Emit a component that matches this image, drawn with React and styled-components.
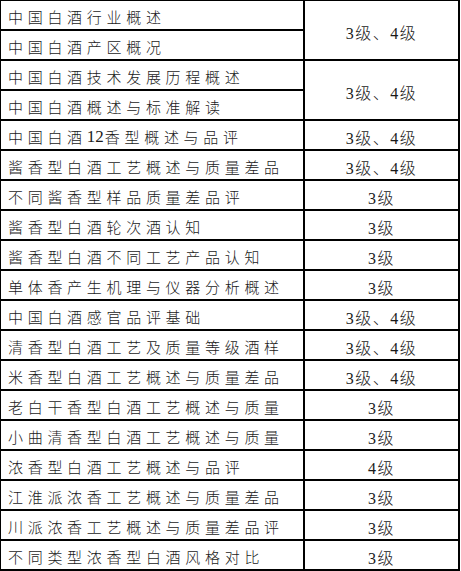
import React from "react";
import styled, { createGlobalStyle } from "styled-components";

const GlobalStyle = createGlobalStyle`
  html, body {
    margin: 0;
    padding: 0;
    background: #ffffff;
  }
  body {
    width: 461px;
    height: 571px;
    overflow: hidden;
  }
`;

const Sheet = styled.div`
  display: grid;
  grid-template-columns: 302px 153px;
  grid-auto-rows: 28px;
  gap: 2px;
  padding: 2px;
  margin: -1px 0 0 -1px;
  width: fit-content;
  background: #000000;
  font-family: "Liberation Serif", "Noto Sans CJK SC", serif;
  color: #1a1a1a;
`;

const NameCell = styled.div`
  grid-column: 1;
  grid-row: ${(p) => p.$row};
  display: flex;
  align-items: center;
  padding: 3px 0 0 7px;
  background: #ffffff;
  font-size: 15px;
  font-weight: 300;
  letter-spacing: 4.7px;
  white-space: nowrap;
  overflow: hidden;
`;

const Digits = styled.span`
  font-size: 17px;
  font-weight: 400;
  letter-spacing: 0;
  margin-right: 1px;
`;

const LevelCell = styled.div`
  grid-column: 2;
  grid-row: ${(p) => p.$row} / span ${(p) => p.$span};
  display: flex;
  align-items: center;
  justify-content: center;
  padding-top: 3px;
  background: #ffffff;
  font-size: 16px;
  font-weight: 300;
  letter-spacing: 1.5px;
  white-space: nowrap;
`;

const groups = [
  { names: ["中国白酒行业概述", "中国白酒产区概况"], level: "3级、4级" },
  { names: ["中国白酒技术发展历程概述", "中国白酒概述与标准解读"], level: "3级、4级" },
  { names: ["中国白酒12香型概述与品评"], level: "3级、4级" },
  { names: ["酱香型白酒工艺概述与质量差品"], level: "3级、4级" },
  { names: ["不同酱香型样品质量差品评"], level: "3级" },
  { names: ["酱香型白酒轮次酒认知"], level: "3级" },
  { names: ["酱香型白酒不同工艺产品认知"], level: "3级" },
  { names: ["单体香产生机理与仪器分析概述"], level: "3级" },
  { names: ["中国白酒感官品评基础"], level: "3级、4级" },
  { names: ["清香型白酒工艺及质量等级酒样"], level: "3级、4级" },
  { names: ["米香型白酒工艺概述与质量差品"], level: "3级、4级" },
  { names: ["老白干香型白酒工艺概述与质量"], level: "3级" },
  { names: ["小曲清香型白酒工艺概述与质量"], level: "3级" },
  { names: ["浓香型白酒工艺概述与品评"], level: "4级" },
  { names: ["江淮派浓香工艺概述与质量差品"], level: "3级" },
  { names: ["川派浓香工艺概述与质量差品评"], level: "3级" },
  { names: ["不同类型浓香型白酒风格对比"], level: "3级" },
];

// keep runs of digits tight, as in the source document
const renderName = (name) =>
  name
    .split(/(\d+)/)
    .filter(Boolean)
    .map((part, i) =>
      /^\d+$/.test(part) ? <Digits key={i}>{part}</Digits> : part
    );

function App() {
  let row = 1;
  const cells = [];
  groups.forEach((g, gi) => {
    const start = row;
    g.names.forEach((name, ni) => {
      cells.push(
        <NameCell key={`n-${gi}-${ni}`} $row={row}>
          {renderName(name)}
        </NameCell>
      );
      row += 1;
    });
    cells.push(
      <LevelCell key={`l-${gi}`} $row={start} $span={g.names.length}>
        {g.level}
      </LevelCell>
    );
  });

  return (
    <>
      <GlobalStyle />
      <Sheet>{cells}</Sheet>
    </>
  );
}

export default App;
